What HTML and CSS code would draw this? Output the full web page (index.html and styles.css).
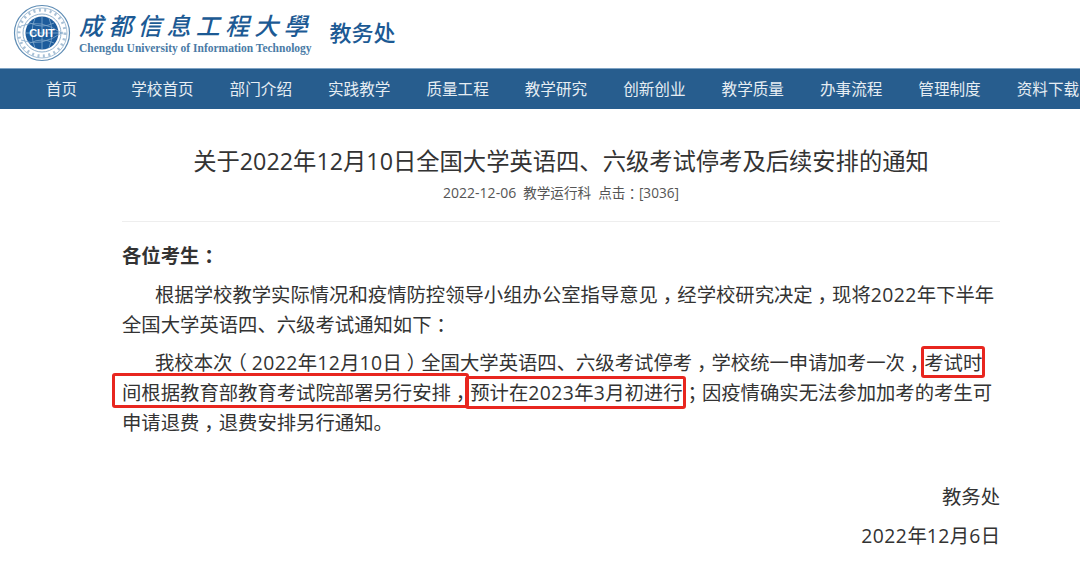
FILE: index.html
```html
<!DOCTYPE html>
<html lang="zh-CN">
<head>
<meta charset="utf-8">
<title>关于2022年12月10日全国大学英语四、六级考试停考及后续安排的通知</title>
<link rel="stylesheet" href="styles.css">
</head>
<body>
<header class="top">
  <svg class="seal" width="58" height="58" viewBox="0 0 58 58" aria-hidden="true">
    <circle cx="29" cy="29" r="27.5" fill="#fff" stroke="#5f8db5" stroke-width="1.2"/>
    <circle cx="29" cy="29" r="25" fill="none" stroke="#a9c3d9" stroke-width="1"/>
    <circle cx="29" cy="29" r="19" fill="none" stroke="#8fb0cc" stroke-width="1"/>
    <circle cx="29" cy="29" r="16.5" fill="#1d5c9c"/>
    <path d="M13 29h32M29 13v32M17 19q12 6 24 0M17 39q12-6 24 0M22 14q-6 15 0 30M36 14q6 15 0 30" fill="none" stroke="#6e9cc6" stroke-width="1"/>
    <path d="M8 22q20-8 42 8M8 36q20 8 42-8" fill="none" stroke="#7ea5c8" stroke-width=".8"/>
    <circle cx="29" cy="29" r="23" fill="none" stroke="#6f97bb" stroke-width="3" stroke-dasharray="2 3.5" opacity=".6"/>
    <text x="29" y="33" class="seal-text">CUIT</text>
  </svg>
  <div class="brand">
    <div class="brand-cn">成都信息工程大學</div>
    <div class="brand-en">Chengdu University of Information Technology</div>
  </div>
  <div class="office">教务处</div>
</header>
<nav class="nav">
  <a class="nav-first">首页</a>
  <a>学校首页</a>
  <a>部门介绍</a>
  <a>实践教学</a>
  <a>质量工程</a>
  <a>教学研究</a>
  <a>创新创业</a>
  <a>教学质量</a>
  <a>办事流程</a>
  <a>管理制度</a>
  <a>资料下载</a>
</nav>
<main class="article">
  <h1 class="title">关于2022年12月10日全国大学英语四、六级考试停考及后续安排的通知</h1>
  <div class="meta"><span>2022-12-06</span><span class="meta-cn">教学运行科</span><span class="meta-cn">点击<span class="pc">：</span>[3036]</span></div>
  <p class="greet">各位考生<span class="pc">：</span></p>
  <p class="para">根据学校教学实际情况和疫情防控领导小组办公室指导意见<span class="pc">，</span>经学校研究决定<span class="pc">，</span>现将<span class="num">2022</span>年下半年全国大学英语四、六级考试通知如下<span class="pc">：</span></p>
  <p class="para">我校本次<span class="pc">（</span><span class="num">2022</span>年<span class="num">12</span>月<span class="num">10</span>日<span class="pc">）</span>全国大学英语四、六级考试停考<span class="pc">，</span>学校统一申请加考一次<span class="pc">，</span><span class="mark mark-a">考试时</span><span class="mark mark-b">间根据教育部教育考试院部署另行安排<span class="pc">，</span></span><span class="mark mark-c">预计在<span class="num">2023</span>年<span class="num">3</span>月初进行</span><span class="pc">；</span>因疫情确实无法参加加考的考生可申请退费<span class="pc">，</span>退费安排另行通知。</p>
  <p class="sign sign-first">教务处</p>
  <p class="sign"><span class="num">2022</span>年<span class="num">12</span>月<span class="num">6</span>日</p>
</main>
</body>
</html>
```
FILE: styles.css
```css
html, body { margin: 0; padding: 0; }
body {
  width: 1080px;
  height: 562px;
  overflow: hidden;
  background: #fff;
  color: #333;
  font-family: "Open Sans", "Noto Sans CJK SC", sans-serif;
}
.top {
  height: 68px;
  display: flex;
  align-items: center;
  padding-left: 13px;
  box-sizing: border-box;
}
.seal { flex: none; margin-top: -3px; }
.seal-text {
  font-family: "Liberation Sans", sans-serif;
  font-size: 11px;
  font-weight: 700;
  fill: #fff;
  text-anchor: middle;
}
.brand { margin-left: 8px; margin-top: -3px; }
.brand-cn {
  font-family: "Noto Sans CJK SC", sans-serif;
  font-size: 24px;
  font-style: italic;
  line-height: 30px;
  letter-spacing: 5.2px;
  color: #1c5a94;
  font-weight: 500;
  white-space: nowrap;
}
.brand-en {
  font-family: "Liberation Serif", serif;
  font-size: 11.5px;
  font-weight: 700;
  line-height: 14px;
  margin-top: 1px;
  color: #4a7ba6;
  white-space: nowrap;
}
.office {
  margin-left: 17px;
  margin-top: -6px;
  font-family: "Noto Sans CJK SC", sans-serif;
  font-size: 22px;
  color: #1c5a94;
  font-weight: 500;
  white-space: nowrap;
}
.nav {
  height: 41px;
  box-sizing: border-box;
  border-top: 1px solid #7fa3c4;
  background: #275d8e;
  display: flex;
  align-items: center;
  gap: 36px;
  padding-left: 46px;
  padding-bottom: 2px;
  color: #e6edf3;
  font-family: "Noto Sans CJK SC", sans-serif;
  font-size: 15.6px;
  white-space: nowrap;
}
.nav-first { margin-right: 18px; }
.article {
  width: 878px;
  margin-left: 122px;
}
.title {
  margin: 0;
  padding-top: 37px;
  font-size: 23.3px;
  line-height: 30px;
  font-weight: 400;
  text-align: center;
  color: #333;
  white-space: nowrap;
}
.meta {
  margin-top: 8px;
  padding-bottom: 19px;
  border-bottom: 1px solid #eee;
  font-size: 14px;
  line-height: 18px;
  text-align: center;
  color: #555;
}
.meta-cn { margin-left: 7px; font-size: 13.6px; }
.pc {
  display: inline-block;
  width: 1em;
  text-align: center;
  text-indent: 0;
  font-feature-settings: "halt";
}
.num { letter-spacing: .45px; }
.greet {
  margin: 19px 0 0;
  font-size: 19.35px;
  line-height: 30px;
  font-weight: 700;
}
.para {
  margin: 8px 0 0;
  padding-right: 3px;
  font-size: 19.35px;
  line-height: 30px;
  text-indent: 33px;
}
.greet + .para { margin-top: 9px; }
.mark { position: relative; }
.mark::after {
  content: "";
  position: absolute;
  border: 3px solid #e8261f;
  border-radius: 3px;
  pointer-events: none;
}
.mark-a::after { left: -3px; right: -3px; top: -3px; bottom: -2px; }
.mark-b::after { left: -10px; right: 1px; top: -6px; bottom: -2px; }
.mark-c::after { left: -5px; right: -3px; top: -3px; bottom: -3px; }
.sign {
  margin: 0;
  font-size: 19.35px;
  line-height: 30px;
  text-align: right;
}
.sign-first { margin-top: 44px; }
.sign + .sign { margin-top: 9px; }
```
